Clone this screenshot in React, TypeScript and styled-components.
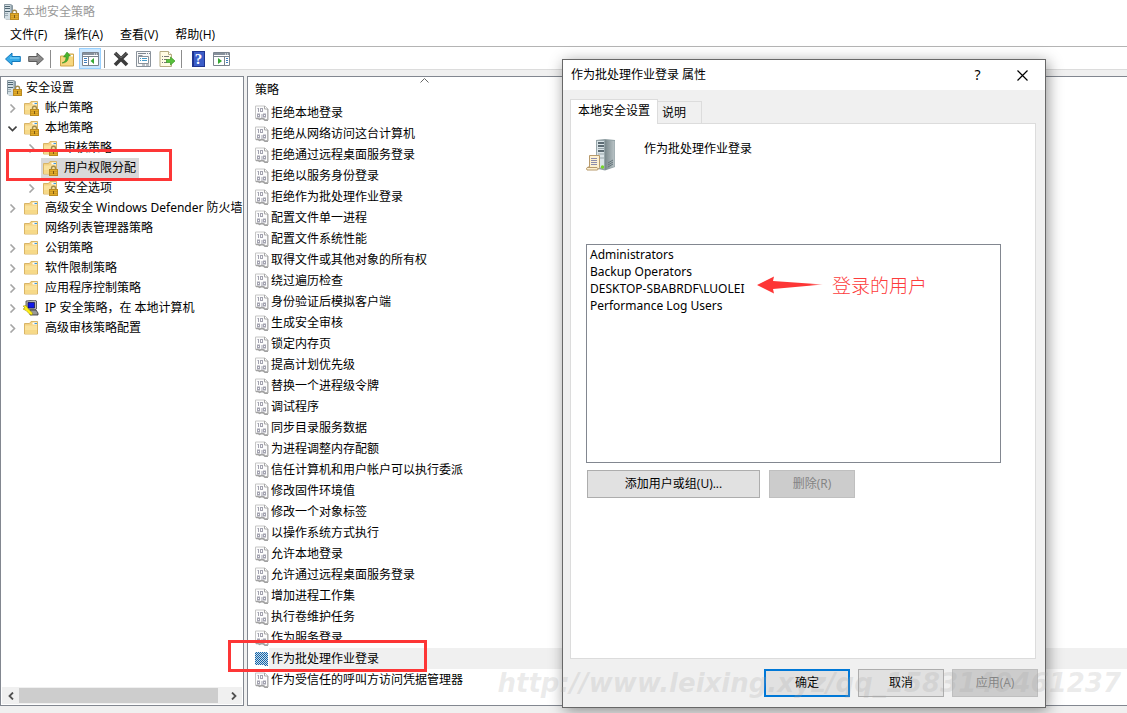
import React from 'react';
import styled, { createGlobalStyle, css } from 'styled-components';

const GlobalStyle = createGlobalStyle`
  * { box-sizing: border-box; }
  html, body { margin: 0; padding: 0; }
  body {
    background: #f0f0f0;
    color: #000;
    font: 12px/20px "Noto Sans", "Noto Sans CJK SC", sans-serif;
  }
  button { font: inherit; color: inherit; margin: 0; padding: 0; }
  ul { list-style: none; margin: 0; padding: 0; }
  svg { display: block; flex: none; }
`;

const Desktop = styled.div`
  position: relative;
  min-height: 100vh;
  display: flex;
  flex-direction: column;
  overflow: hidden;
`;

const TitleBar = styled.header`
  display: flex;
  align-items: center;
  gap: 4px;
  height: 24px;
  padding-left: 3px;
  background: #fff;
  color: #999;
`;

const MenuBar = styled.nav`
  display: flex;
  gap: 1px;
  height: 23px;
  padding: 0 2px;
  background: #fff;
  border-bottom: 1px solid #b4b4b4;
`;

const MenuItem = styled.button`
  border: 0;
  background: none;
  padding: 0 8px;
  font-family: "Open Sans", "Noto Sans CJK SC", sans-serif;
`;

const Toolbar = styled.div`
  display: flex;
  align-items: center;
  gap: 1px;
  height: 23px;
  padding: 1px 2px 0;
  background: #fff;
  border-bottom: 1px solid #dcdcdc;
`;

const ToolButton = styled.button<{ $active?: boolean }>`
  display: flex;
  align-items: center;
  justify-content: center;
  width: 22px;
  height: 21px;
  border: 1px solid ${p => (p.$active ? '#99d1ff' : 'transparent')};
  background: ${p => (p.$active ? '#cce8ff' : 'none')};
`;

const Separator = styled.span`
  width: 1px;
  height: 18px;
  margin: 0 4px 0 2px;
  background: #8c8c8c;
`;

const Panes = styled.main`
  flex: 1;
  display: flex;
  gap: 3px;
  padding: 6px 0 7px;
`;

const TreePane = styled.section`
  position: relative;
  flex: none;
  width: 244px;
  display: flex;
  flex-direction: column;
  justify-content: space-between;
  border: 1px solid #828790;
  background: #fff;
`;

const Tree = styled.ul`
  overflow: hidden;
  padding-top: 1px;
`;

const TreeRow = styled.li<{ $level: number }>`
  position: relative;
  display: flex;
  align-items: center;
  height: 20px;
  padding-left: ${p => (p.$level === 0 ? 4 : p.$level * 19 - 16)}px;
  white-space: nowrap;
`;

const Expander = styled.span`
  flex: none;
  width: 18px;
  padding-left: 4px;
`;

const TreeLabel = styled.span<{ $root?: boolean; $selected?: boolean }>`
  display: flex;
  align-items: center;
  gap: ${p => (p.$root ? 4 : 6)}px;
  padding: 0 3px 0 1px;
  background: ${p => (p.$selected ? '#d9d9d9' : 'none')};
`;

const ScrollBar = styled.div`
  display: flex;
  height: 17px;
  margin: 0 1px 1px;
  background: #f0f0f0;
`;

const ScrollButton = styled.button`
  display: flex;
  align-items: center;
  justify-content: center;
  width: 17px;
  border: 0;
  background: none;
`;

const ScrollTrack = styled.div`
  flex: 1;
  padding: 1px 7px 1px 0;
`;

const ScrollThumb = styled.div`
  height: 15px;
  background: #cdcdcd;
`;

const ListPane = styled.section`
  flex: 1;
  border: solid #828790;
  border-width: 1px 0 1px 1px;
  background: #fff;
`;

const PolicyTable = styled.table`
  width: 100%;
  border-collapse: collapse;
  th, td { padding: 0; }
`;

const PolicyHeader = styled.th`
  position: relative;
  height: 25px;
  text-align: left;
  font-weight: 400;
  text-indent: 7px;
`;

const SortMark = styled.svg`
  position: absolute;
  top: 1px;
  left: 172px;
`;

const PolicyRow = styled.div`
  position: relative;
  display: flex;
  height: 21px;
  padding-left: 7px;
  align-items: center;
`;

const PolicyLabel = styled.span<{ $selected?: boolean }>`
  flex: 1;
  padding-left: 2px;
  line-height: 21px;
  background: ${p => (p.$selected ? '#f0f0f0' : 'none')};
`;

const redFrame = css`
  position: absolute;
  z-index: 1;
  border: 3px solid #fd3636;
  pointer-events: none;
`;

const TreeFrame = styled.span`
  ${redFrame}
  top: -9px;
  left: 5px;
  width: 166px;
  height: 32px;
`;

const PolicyFrame = styled.span`
  ${redFrame}
  top: -8px;
  left: -20px;
  width: 199px;
  height: 32px;
`;

const Dialog = styled.section`
  position: absolute;
  z-index: 2;
  top: 59px;
  left: 562px;
  width: 484px;
  border: 1px solid #686868;
  background: #f0f0f0;
  box-shadow: 2px 3px 14px rgba(0, 0, 0, 0.42);
`;

const DialogTitle = styled.header`
  display: flex;
  align-items: center;
  height: 30px;
  padding-left: 8px;
  background: #fff;
`;

const DialogName = styled.h1`
  flex: 1;
  margin: 0;
  font-size: 12px;
  font-weight: 400;
`;

const CaptionButton = styled.button`
  display: flex;
  align-items: center;
  justify-content: center;
  width: 45px;
  height: 30px;
  border: 0;
  background: none;
  font-size: 14px;
`;

const DialogBody = styled.div`
  padding: 9px 7px 10px;
`;

const Tabs = styled.div`
  display: flex;
  align-items: flex-end;
`;

const Tab = styled.button<{ $active?: boolean }>`
  height: ${p => (p.$active ? 25 : 22)}px;
  padding: ${p => (p.$active ? '0 7px 2px' : '0 15px 0 4px')};
  margin-bottom: ${p => (p.$active ? -1 : 0)}px;
  border: 1px solid #dcdcdc;
  border-bottom: 0;
  border-left-width: ${p => (p.$active ? 1 : 0)}px;
  background: ${p => (p.$active ? '#fff' : '#f0f0f0')};
  z-index: ${p => (p.$active ? 1 : 0)};
`;

const TabPanel = styled.div`
  min-height: 536px;
  margin-right: 2px;
  padding: 15px 34px 15px 15px;
  border: 1px solid #dcdcdc;
  background: #fff;
`;

const PolicySummary = styled.div`
  display: flex;
  gap: 26px;
  height: 105px;
`;

const UserList = styled.ul`
  height: 219px;
  padding: 1px 3px;
  border: 1px solid #828790;
`;

const UserRow = styled.li`
  position: relative;
  line-height: 17px;
`;

const Callout = styled.span`
  position: absolute;
  top: -7px;
  left: 167px;
  display: flex;
  align-items: center;
  gap: 8px;
  color: #fd3c3c;
  font: 300 19px/24px "Noto Sans CJK SC", sans-serif;
  white-space: nowrap;
`;

const ButtonRow = styled.div<{ $end?: boolean }>`
  display: flex;
  gap: ${p => (p.$end ? 8 : 9)}px;
  justify-content: ${p => (p.$end ? 'flex-end' : 'flex-start')};
  padding: ${p => (p.$end ? '10px 0 0' : '7px 1px 0')};
`;

const PushButton = styled.button<{ $wide?: boolean; $primary?: boolean }>`
  width: ${p => (p.$wide ? 173 : 86)}px;
  height: 28px;
  border: ${p => (p.$primary ? '2px solid #0078d7' : '1px solid #adadad')};
  background: #e1e1e1;
  font-family: "Open Sans", "Noto Sans CJK SC", sans-serif;
  &:disabled {
    border-color: #bfbfbf;
    background: #ccc;
    color: #838383;
  }
`;

const Watermark = styled.div`
  position: absolute;
  z-index: 3;
  right: 6px;
  bottom: 14px;
  color: rgba(165, 165, 165, 0.22);
  font: italic bold 26px/32px "DejaVu Sans", sans-serif;
  white-space: nowrap;
  pointer-events: none;
`;

const Padlock = () => (
  <g>
    <path d="M9.5 10V8.2a2 2 0 0 1 4 0V10" fill="none" stroke="#a08b50" strokeWidth="1.4" />
    <rect x="7.5" y="9.5" width="8" height="6" fill="#e2ac28" stroke="#b98a22" />
    <path d="M8 11.5h7M8 13.5h7" stroke="#cf9a24" />
    <rect x="11" y="11" width="1" height="3" fill="#7d5a12" />
  </g>
);

const ServerIcon = () => (
  <svg width="16" height="16" viewBox="0 0 16 16">
    <path d="M1.500.5h6l2 1V15h-6.500l-1.500-1z" fill="#93a3ac" stroke="#8a99a2" />
    <path d="M2 1h5.500v14H2z" fill="#d3dfe5" />
    <path d="M2 2.500h5M2 4.500h5M2 7.500h5" stroke="#4f6672" />
    <path d="M2 9.500h3M2 11.500h3" stroke="#9cabb3" />
    <Padlock />
  </svg>
);

const FolderIcon = ({ locked }: { locked?: boolean }) => (
  <svg width="16" height="16" viewBox="0 0 16 16">
    <path d="M1.500 3.500h5l1.500-2h6.500v12.500h-13z" fill="#f3d283" stroke="#d9b566" />
    <path d="M9.500 2.500h4.500v2H9.500z" fill="#fff" />
    <path d="M11.500 3h2.500v1h-2.500z" fill="#3b9be4" />
    <path d="M2 5.500h12V13.500H2z" fill="#fae29d" />
    <path d="M2 10h12v3.500H2z" fill="#f6d988" />
    {locked && <Padlock />}
  </svg>
);

const IpIcon = () => (
  <svg width="16" height="16" viewBox="0 0 16 16">
    <path d="M3 1l9-1 1.500 1v8l-1.500 1H4L3 9z" fill="#b5b5b5" stroke="#444" strokeWidth=".8" />
    <path d="M5 2.500h6.500V8H5z" fill="#1018e8" stroke="#101040" strokeWidth=".7" />
    <path d="M7 10h6l2 3v2H7z" fill="#999" stroke="#333" strokeWidth=".8" />
    <path d="M0 6l3-.5L5.500 9l4 4-.5 2-2-.5L3 10.500 0 9l2-1z" fill="#ffee18" stroke="#8c8200" strokeWidth=".5" />
  </svg>
);

const Chevron = ({ open }: { open?: boolean }) => (
  <svg width="9" height="9" viewBox="0 0 9 9">
    <path
      d={open ? 'M.5 2.500l4 4 4-4' : 'M2.500.5l4 4-4 4'}
      fill="none"
      stroke={open ? '#404040' : '#a6a6a6'}
      strokeWidth="1.600"
    />
  </svg>
);

const DocIcon = ({ selected }: { selected?: boolean }) => (
  <svg width="14" height="16" viewBox="0 0 14 16">
    {selected ? (
      <>
        <defs>
          <pattern id="dither" width="2" height="2" patternUnits="userSpaceOnUse">
            <rect width="2" height="2" fill="#cfdbe6" />
            <path d="M0 0h1v1H0zM1 1h1v1H1z" fill="#0f65ad" />
          </pattern>
        </defs>
        <path d="M0 1h11l2 2v12h-3l-2-1H0z" fill="url(#dither)" shapeRendering="crispEdges" />
      </>
    ) : (
      <>
        <path d="M.5 1H10l2.500 2.500v11h-2l-1.500-1H.5z" fill="#fcfcfc" stroke="#c6c6c6" />
        <path d="M9.500 1v3h3.500v11" fill="none" stroke="#a9a9a9" />
        <path d="M1 13.500h2l1.500 1 2-1 2 .5 1.500 1.300h3" fill="none" stroke="#a0a0a0" strokeWidth="1.500" />
        <path d="M3.500 3v4M2.500 3.500h1M7 9v4" stroke="#a3a3b0" />
        <rect x="5.500" y="3.500" width="2" height="3" fill="none" stroke="#a3a3b0" />
        <rect x="2.500" y="9" width="2" height="3" fill="none" stroke="#a3a3b0" />
        <rect x="8.500" y="9" width="2" height="3" fill="none" stroke="#a3a3b0" />
      </>
    )}
  </svg>
);

const ArrowIcon = ({ forward }: { forward?: boolean }) => (
  <svg width="16" height="16" viewBox="0 0 16 16">
    <path
      d={forward ? 'M15.500 8L9 2v3.500H.7v5H9V14z' : 'M.5 8L7 2v3.500h8.300v5H7V14z'}
      fill={forward ? '#8b8b8b' : '#36aae8'}
      stroke={forward ? '#5c5c5c' : '#1479bb'}
    />
    <path d={forward ? 'M1.500 7h9' : 'M5 7h9.500'} stroke={forward ? '#b5b5b5' : '#8bd8fa'} />
  </svg>
);

const UpFolderIcon = () => (
  <svg width="16" height="16" viewBox="0 0 16 16">
    <path d="M1.500 5h5.500l1.500-2h6v12h-13z" fill="#f7d77f" stroke="#cfa54a" />
    <path d="M10 4h4v1.500h-4z" fill="#fff" />
    <path d="M3 12c3-1 4-3 4-6H4.500L8 1l3.500 4H9.500c0 5-2.500 7-6.500 7z" fill="#49b52f" stroke="#2d871b" strokeWidth=".5" />
  </svg>
);

const WindowIcon = ({ play }: { play?: boolean }) => (
  <svg width="17" height="14" viewBox="0 0 17 14">
    <path d="M.5.5h16v13H.5z" fill="#fff" stroke="#7b848e" />
    <path d="M1 1h15v2H1z" fill="#87919c" />
    <path d="M12 2h1M14 2h1" stroke="#fff" />
    <path d="M.5 4.500h16" stroke="#7b848e" />
    <path d={play ? 'M11.500 4.500v9' : 'M6.500 4.500v9'} stroke="#7b848e" />
    <path d={play ? 'M13 6.500h2M13 8.500h2M13 10.500h2' : 'M2 6.500h3M2 8.500h3M2 10.500h3'} stroke="#3f7fc0" />
    <path d={play ? 'M5 6l4 3-4 3z' : 'M12 6L8.500 9l3.500 3z'} fill="#35a832" />
  </svg>
);

const DeleteIcon = () => (
  <svg width="16" height="16" viewBox="0 0 16 16">
    <path d="M2 2l12 12M14 2L2 14" stroke="#3c3c3c" strokeWidth="3.600" />
    <path d="M2 2l6 5 6-5" fill="none" stroke="#686868" />
  </svg>
);

const PropertiesIcon = () => (
  <svg width="16" height="16" viewBox="0 0 16 16">
    <path d="M.5.5h14v15H.5z" fill="#f8f8f8" stroke="#8a929b" />
    <path d="M2 2.500h8M11 2.500h1M13 2.500h1" stroke="#7d8690" />
    <path d="M2.500 5.500h10v7h-10zM2.500 5.500V4.500h4" fill="#fff" stroke="#8a929b" />
    <path d="M4 7.500h1M6 7.500h5M4 9.500h1M6 9.500h5" stroke="#469bc8" />
    <path d="M6 14h3M10 14h3" stroke="#7d8690" />
  </svg>
);

const ExportIcon = () => (
  <svg width="17" height="16" viewBox="0 0 17 16">
    <path d="M1 .5h8.500l3 3v12H1z" fill="#fffbe4" stroke="#b7ac83" />
    <path d="M9.500.5v3h3" fill="#fff" stroke="#b7ac83" />
    <path d="M3 5.500h1M5 5.500h5M3 8.500h1M5 8.500h3M3 11.500h1M5 11.500h3" stroke="#777" />
    <path d="M7.500 8.500h4V6l4.500 4-4.500 4v-2.500h-4z" fill="#58c13b" stroke="#3a9722" strokeWidth=".7" />
  </svg>
);

const HelpBook = styled.span`
  width: 13px;
  height: 16px;
  border: 1px solid #1f3490;
  border-left-width: 2px;
  background: #3c5dc8;
  color: #fff;
  font: bold 15px/14px "Liberation Serif", serif;
  text-align: center;
`;

const TowerIcon = () => (
  <svg width="32" height="32" viewBox="0 0 32 32">
    <defs>
      <linearGradient id="side" x1="0" x2="1">
        <stop offset="0" stopColor="#79888c" />
        <stop offset="1" stopColor="#b9c3c6" />
      </linearGradient>
    </defs>
    <path d="M10 1l9-1 10 1v27l-10 3.500-9-2z" fill="#91a0a4" />
    <path d="M19 1l9.500 1v25.500L19 31z" fill="url(#side)" />
    <path d="M10.500 1.500H18.500V30l-8-2z" fill="#dae4e8" stroke="#8a999e" strokeWidth=".7" />
    <path d="M12 4h6M12 7h6M12 12h6" stroke="#34444e" strokeWidth="1.500" />
    <path d="M12 9.500h6M12 15h6M14 19h4" stroke="#98a6ab" />
    <path d="M22 24l5-3M22 26l5-3M22 28l5-3" stroke="#65757b" />
    <circle cx="16.500" cy="28" r="1.700" fill="#76d628" />
    <path d="M3.500 16.500h10v12l-2 2.500H1q-1.500-2 1-3h1.500z" fill="#fdf1d2" stroke="#b89a6c" />
    <path d="M5 19.500h6M5 21.500h6M5 23.500h6M5 25.500h6" stroke="#8c8cad" />
    <path d="M1.500 28.500h9.500q1 1 .5 2" fill="none" stroke="#b89a6c" />
  </svg>
);

const CalloutArrow = () => (
  <svg width="67" height="18" viewBox="0 0 67 18">
    <defs>
      <linearGradient id="fade" x1="0" x2="1">
        <stop offset=".8" stopColor="#fd3636" />
        <stop offset="1" stopColor="#fd3636" stopOpacity=".3" />
      </linearGradient>
    </defs>
    <path d="M0 9L17 0.500l-1 4.500 50 3.500-50 4.500 1 4.500z" fill="url(#fade)" />
  </svg>
);

type Node = {
  label: string;
  level: number;
  icon: 'server' | 'locked' | 'folder' | 'ip';
  state?: 'open' | 'closed';
  selected?: boolean;
};

const nodes: Node[] = [
  { label: '安全设置', level: 0, icon: 'server' },
  { label: '帐户策略', level: 1, icon: 'locked', state: 'closed' },
  { label: '本地策略', level: 1, icon: 'locked', state: 'open' },
  { label: '审核策略', level: 2, icon: 'locked', state: 'closed' },
  { label: '用户权限分配', level: 2, icon: 'locked', selected: true },
  { label: '安全选项', level: 2, icon: 'locked', state: 'closed' },
  { label: '高级安全 Windows Defender 防火墙', level: 1, icon: 'folder', state: 'closed' },
  { label: '网络列表管理器策略', level: 1, icon: 'folder' },
  { label: '公钥策略', level: 1, icon: 'folder', state: 'closed' },
  { label: '软件限制策略', level: 1, icon: 'folder', state: 'closed' },
  { label: '应用程序控制策略', level: 1, icon: 'folder', state: 'closed' },
  { label: 'IP 安全策略，在 本地计算机', level: 1, icon: 'ip', state: 'closed' },
  { label: '高级审核策略配置', level: 1, icon: 'folder', state: 'closed' },
];

const policies = [
  '拒绝本地登录', '拒绝从网络访问这台计算机', '拒绝通过远程桌面服务登录', '拒绝以服务身份登录',
  '拒绝作为批处理作业登录', '配置文件单一进程', '配置文件系统性能', '取得文件或其他对象的所有权',
  '绕过遍历检查', '身份验证后模拟客户端', '生成安全审核', '锁定内存页', '提高计划优先级',
  '替换一个进程级令牌', '调试程序', '同步目录服务数据', '为进程调整内存配额',
  '信任计算机和用户帐户可以执行委派', '修改固件环境值', '修改一个对象标签', '以操作系统方式执行',
  '允许本地登录', '允许通过远程桌面服务登录', '增加进程工作集', '执行卷维护任务', '作为服务登录',
  '作为批处理作业登录', '作为受信任的呼叫方访问凭据管理器',
];
const selectedPolicy = '作为批处理作业登录';

const users = ['Administrators', 'Backup Operators', 'DESKTOP-SBABRDF\\LUOLEI', 'Performance Log Users'];

const NodeIcon = ({ icon }: { icon: Node['icon'] }) => {
  if (icon === 'server') return <ServerIcon />;
  if (icon === 'ip') return <IpIcon />;
  return <FolderIcon locked={icon === 'locked'} />;
};

const PolicyDialog = () => (
  <Dialog role="dialog" aria-labelledby="dialog-name">
    <DialogTitle>
      <DialogName id="dialog-name">作为批处理作业登录 属性</DialogName>
      <CaptionButton aria-label="帮助">?</CaptionButton>
      <CaptionButton aria-label="关闭">
        <svg width="11" height="11" viewBox="0 0 11 11">
          <path d="M.5.5l10 10M10.500.5l-10 10" stroke="#000" strokeWidth="1.200" />
        </svg>
      </CaptionButton>
    </DialogTitle>
    <DialogBody>
      <Tabs role="tablist">
        <Tab role="tab" aria-selected="true" $active>本地安全设置</Tab>
        <Tab role="tab" aria-selected="false">说明</Tab>
      </Tabs>
      <TabPanel role="tabpanel">
        <PolicySummary>
          <TowerIcon />
          <span>作为批处理作业登录</span>
        </PolicySummary>
        <UserList>
          {users.map(user => (
            <UserRow key={user}>
              {user}
              {user.startsWith('DESKTOP') && (
                <Callout>
                  <CalloutArrow />
                  登录的用户
                </Callout>
              )}
            </UserRow>
          ))}
        </UserList>
        <ButtonRow>
          <PushButton $wide>添加用户或组(U)...</PushButton>
          <PushButton disabled>删除(R)</PushButton>
        </ButtonRow>
      </TabPanel>
      <ButtonRow $end>
        <PushButton $primary>确定</PushButton>
        <PushButton>取消</PushButton>
        <PushButton disabled>应用(A)</PushButton>
      </ButtonRow>
    </DialogBody>
  </Dialog>
);

export default function App() {
  return (
    <>
      <GlobalStyle />
      <Desktop>
        <TitleBar>
          <ServerIcon />
          <span>本地安全策略</span>
        </TitleBar>
        <MenuBar>
          {['文件(F)', '操作(A)', '查看(V)', '帮助(H)'].map(item => (
            <MenuItem key={item}>{item}</MenuItem>
          ))}
        </MenuBar>
        <Toolbar>
          <ToolButton aria-label="后退"><ArrowIcon /></ToolButton>
          <ToolButton aria-label="前进"><ArrowIcon forward /></ToolButton>
          <Separator />
          <ToolButton aria-label="上一级"><UpFolderIcon /></ToolButton>
          <ToolButton aria-label="显示控制台树" $active><WindowIcon /></ToolButton>
          <Separator />
          <ToolButton aria-label="删除"><DeleteIcon /></ToolButton>
          <ToolButton aria-label="属性"><PropertiesIcon /></ToolButton>
          <ToolButton aria-label="导出列表"><ExportIcon /></ToolButton>
          <Separator />
          <ToolButton aria-label="帮助"><HelpBook>?</HelpBook></ToolButton>
          <ToolButton aria-label="显示操作窗格"><WindowIcon play /></ToolButton>
        </Toolbar>
        <Panes>
          <TreePane>
            <Tree>
              {nodes.map(node => (
                <TreeRow key={node.label} $level={node.level}>
                  {node.level > 0 && (
                    <Expander>
                      {node.state && <Chevron open={node.state === 'open'} />}
                    </Expander>
                  )}
                  <TreeLabel $root={node.level === 0} $selected={node.selected}>
                    <NodeIcon icon={node.icon} />
                    {node.label}
                  </TreeLabel>
                  {node.selected && <TreeFrame />}
                </TreeRow>
              ))}
            </Tree>
            <ScrollBar>
              <ScrollButton aria-label="向左滚动">
                <svg width="6" height="8" viewBox="0 0 6 8">
                  <path d="M5 .5L1.500 4 5 7.500" fill="none" stroke="#505050" strokeWidth="1.800" />
                </svg>
              </ScrollButton>
              <ScrollTrack><ScrollThumb /></ScrollTrack>
              <ScrollButton aria-label="向右滚动">
                <svg width="6" height="8" viewBox="0 0 6 8">
                  <path d="M1 .5L4.500 4 1 7.500" fill="none" stroke="#505050" strokeWidth="1.800" />
                </svg>
              </ScrollButton>
            </ScrollBar>
          </TreePane>
          <ListPane>
            <PolicyTable>
              <thead>
                <tr>
                  <PolicyHeader scope="col">
                    策略
                    <SortMark width="9" height="5" viewBox="0 0 9 5">
                      <path d="M.5 4.500l4-4 4 4" fill="none" stroke="#666" />
                    </SortMark>
                  </PolicyHeader>
                </tr>
              </thead>
              <tbody>
                {policies.map(policy => {
                  const selected = policy === selectedPolicy;
                  return (
                    <tr key={policy}>
                      <td>
                        <PolicyRow>
                          <DocIcon selected={selected} />
                          <PolicyLabel $selected={selected}>{policy}</PolicyLabel>
                          {selected && <PolicyFrame />}
                        </PolicyRow>
                      </td>
                    </tr>
                  );
                })}
              </tbody>
            </PolicyTable>
          </ListPane>
        </Panes>
        <PolicyDialog />
        <Watermark aria-hidden="true">http://www.leixing.xyz/qq_1583140461237</Watermark>
      </Desktop>
    </>
  );
}
